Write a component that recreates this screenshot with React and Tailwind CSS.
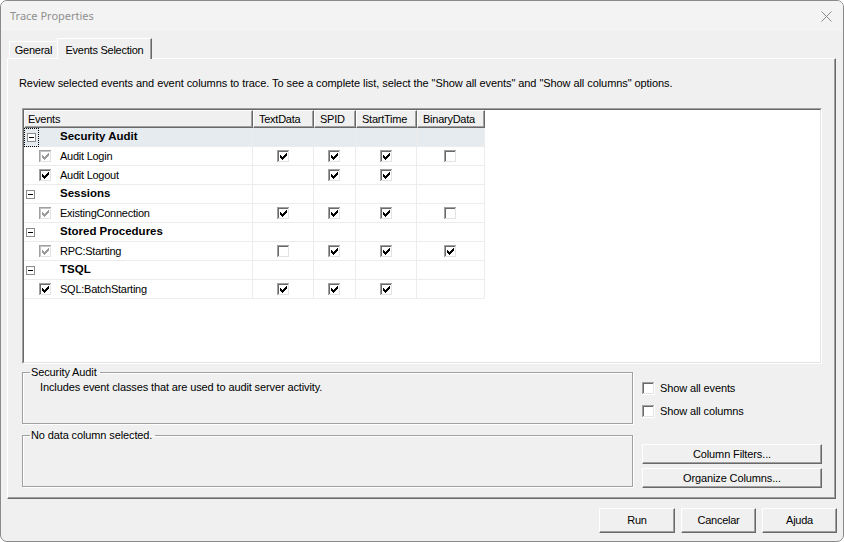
import React from "react";

const rows = [
  { group: "Security Audit", selected: true },
  { name: "Audit Login", state: "disabled", cols: [1, 1, 1, 0] },
  { name: "Audit Logout", state: "on", cols: [null, 1, 1, null] },
  { group: "Sessions" },
  { name: "ExistingConnection", state: "disabled", cols: [1, 1, 1, 0] },
  { group: "Stored Procedures" },
  { name: "RPC:Starting", state: "disabled", cols: [0, 1, 1, 1] },
  { group: "TSQL" },
  { name: "SQL:BatchStarting", state: "on", cols: [1, 1, 1, null] },
];

const columns = [
  { label: "TextData", w: "w-[61px]" },
  { label: "SPID", w: "w-[42px]" },
  { label: "StartTime", w: "w-[61px]" },
  { label: "BinaryData", w: "w-[68px]" },
];

// classic 3d checkbox, drawn pixel by pixel
function Box({ checked, disabled }) {
  const tl2 = disabled ? "#c4c4c4" : "#696969";
  const mark = disabled ? "#9a9a9a" : "#000";
  const ys = [5, 6, 7, 6, 5, 4, 3];
  return (
    <svg width="13" height="13" viewBox="0 0 13 13" shapeRendering="crispEdges" className="shrink-0">
      <rect x="0" y="0" width="13" height="13" fill="#fff" />
      <rect x="0" y="0" width="12" height="12" fill="#a0a0a0" />
      <rect x="1" y="1" width="11" height="11" fill="#e3e3e3" />
      <rect x="1" y="1" width="10" height="10" fill={tl2} />
      <rect x="2" y="2" width="9" height="9" fill="#fff" />
      {checked && ys.map((y, i) => <rect key={i} x={3 + i} y={y} width="1" height="3" fill={mark} />)}
    </svg>
  );
}

function Minus() {
  return (
    <svg width="9" height="9" viewBox="0 0 9 9" shapeRendering="crispEdges" className="shrink-0">
      <rect x="0.5" y="0.5" width="8" height="8" fill="#fff" stroke="#8c8c8c" />
      <rect x="2" y="4" width="5" height="1" fill="#000" />
    </svg>
  );
}

function Btn({ children, className = "" }) {
  return (
    <button className={`bg-[#f0f0f0] border border-t-white border-l-white border-r-[#696969] border-b-[#696969] shadow-[inset_-1px_-1px_0_#a0a0a0] flex items-center justify-center text-[11px] ${className}`}>
      {children}
    </button>
  );
}

function GridRow({ row }) {
  const bg = row.selected ? "bg-[#e6ebf0]" : "bg-white";
  return (
    <div className={`flex h-[19px] ${bg}`}>
      <div className="w-[229px] border-r border-b border-[#ececec] flex items-center">
        {row.group ? (
          <>
            <div className={`w-[15px] h-[19px] flex items-center pl-[2px] ${row.selected ? "border border-dotted border-black pl-[1px]" : ""}`}>
              <Minus />
            </div>
            <span className="ml-[21px] font-bold text-[11.5px] tracking-[0px]">{row.group}</span>
          </>
        ) : (
          <>
            <div className="ml-[15px]">
              <Box checked disabled={row.state === "disabled"} />
            </div>
            <span className="ml-[8px]">{row.name}</span>
          </>
        )}
      </div>
      {columns.map((c, i) => (
        <div key={c.label} className={`${c.w} border-r border-b border-[#ececec] flex items-center justify-center`}>
          {row.cols && row.cols[i] !== null && <Box checked={row.cols[i] === 1} />}
        </div>
      ))}
    </div>
  );
}

export default function App() {
  return (
    <div className="w-[844px] h-[542px] bg-[#f0f0f0] border border-[#8a8a8a] rounded-[7px] overflow-hidden flex flex-col font-['Liberation_Sans',Arial,sans-serif] text-[11px] tracking-[-0.25px] text-black">
      {/* title bar */}
      <div className="h-[30px] bg-[#f3f3f3] flex items-center justify-between pl-[9px] pr-[11px] shrink-0">
        <span className="font-['Noto_Sans',sans-serif] text-[11px] tracking-normal text-[#8f8f8f]">Trace Properties</span>
        <svg width="11" height="11" viewBox="0 0 11 11">
          <path d="M0.5 0.5 L10.5 10.5 M10.5 0.5 L0.5 10.5" stroke="#8a8a8a" strokeWidth="1" />
        </svg>
      </div>

      {/* tabs */}
      <div className="h-[27px] flex items-end pl-[8px] shrink-0">
        <div className="w-[48px] h-[17px] border-l border-t border-white flex items-center justify-center pt-[1px]">General</div>
        <div className="w-[95px] h-[21px] -mb-px relative z-10 bg-[#f0f0f0] border-l border-t border-white border-r border-r-[#696969] shadow-[inset_-1px_0_0_#a0a0a0] flex items-start justify-center pt-[3px]">
          Events Selection
        </div>
      </div>

      {/* tab page */}
      <div className="ml-[6px] w-[829px] h-[441px] border border-t-white border-l-white border-r-[#696969] border-b-[#696969] shadow-[inset_-1px_-1px_0_#a0a0a0] flex flex-col shrink-0">
        <div className="mt-[18px] pl-[11px] leading-[13px] tracking-[-0.07px]">
          Review selected events and event columns to trace. To see a complete list, select the "Show all events" and "Show all columns" options.
        </div>

        {/* grid */}
        <div className="mt-[18px] ml-[14px] w-[800px] h-[256px] border border-t-[#a0a0a0] border-l-[#a0a0a0] border-r-white border-b-white">
          <div className="w-full h-full bg-white border border-t-[#696969] border-l-[#696969] border-r-[#e3e3e3] border-b-[#e3e3e3]">
            <div className="flex h-[18px]">
              <div className="w-[229px] bg-[#f0f0f0] border-t border-l border-white border-r border-b border-r-[#696969] border-b-[#696969] shadow-[inset_-1px_-1px_0_#a0a0a0] flex items-center pl-[3px]">
                Events
              </div>
              {columns.map((c) => (
                <div key={c.label} className={`${c.w} bg-[#f0f0f0] border-t border-l border-white border-r border-b border-r-[#696969] border-b-[#696969] shadow-[inset_-1px_-1px_0_#a0a0a0] flex items-center pl-[5px]`}>
                  {c.label}
                </div>
              ))}
            </div>
            <div className="w-[461px]">
              {rows.map((r, i) => (
                <GridRow key={i} row={r} />
              ))}
            </div>
          </div>
        </div>

        {/* lower area */}
        <div className="flex mt-[2px] ml-[14px] tracking-[-0.12px]">
          <div className="w-[611px] flex flex-col">
            <fieldset className="h-[58px] border border-[#a0a0a0] shadow-[inset_1px_1px_0_#fff,1px_1px_0_#fff]">
              <legend className="ml-[7px] pl-[1px] pr-[3px] leading-[13px]">Security Audit</legend>
              <div className="pl-[17px] mt-[2px] leading-[13px]">Includes event classes that are used to audit server activity.</div>
            </fieldset>
            <fieldset className="mt-[5px] h-[58px] border border-[#a0a0a0] shadow-[inset_1px_1px_0_#fff,1px_1px_0_#fff]">
              <legend className="ml-[7px] pl-[1px] pr-[3px] leading-[13px]">No data column selected.</legend>
            </fieldset>
          </div>

          <div className="ml-[9px] w-[180px] flex flex-col">
            <label className="mt-[16px] h-[13px] flex items-center">
              <Box />
              <span className="ml-[5px]">Show all events</span>
            </label>
            <label className="mt-[10px] h-[13px] flex items-center">
              <Box />
              <span className="ml-[5px]">Show all columns</span>
            </label>
            <Btn className="mt-[26px] h-[20px] w-[180px]">Column Filters...</Btn>
            <Btn className="mt-[4px] h-[20px] w-[180px]">Organize Columns...</Btn>
          </div>
        </div>
      </div>

      {/* dialog buttons */}
      <div className="flex justify-end gap-[6px] pr-[6px] mt-[9px]">
        <Btn className="w-[76px] h-[25px]">Run</Btn>
        <Btn className="w-[75px] h-[25px]">Cancelar</Btn>
        <Btn className="w-[75px] h-[25px]">Ajuda</Btn>
      </div>
    </div>
  );
}
